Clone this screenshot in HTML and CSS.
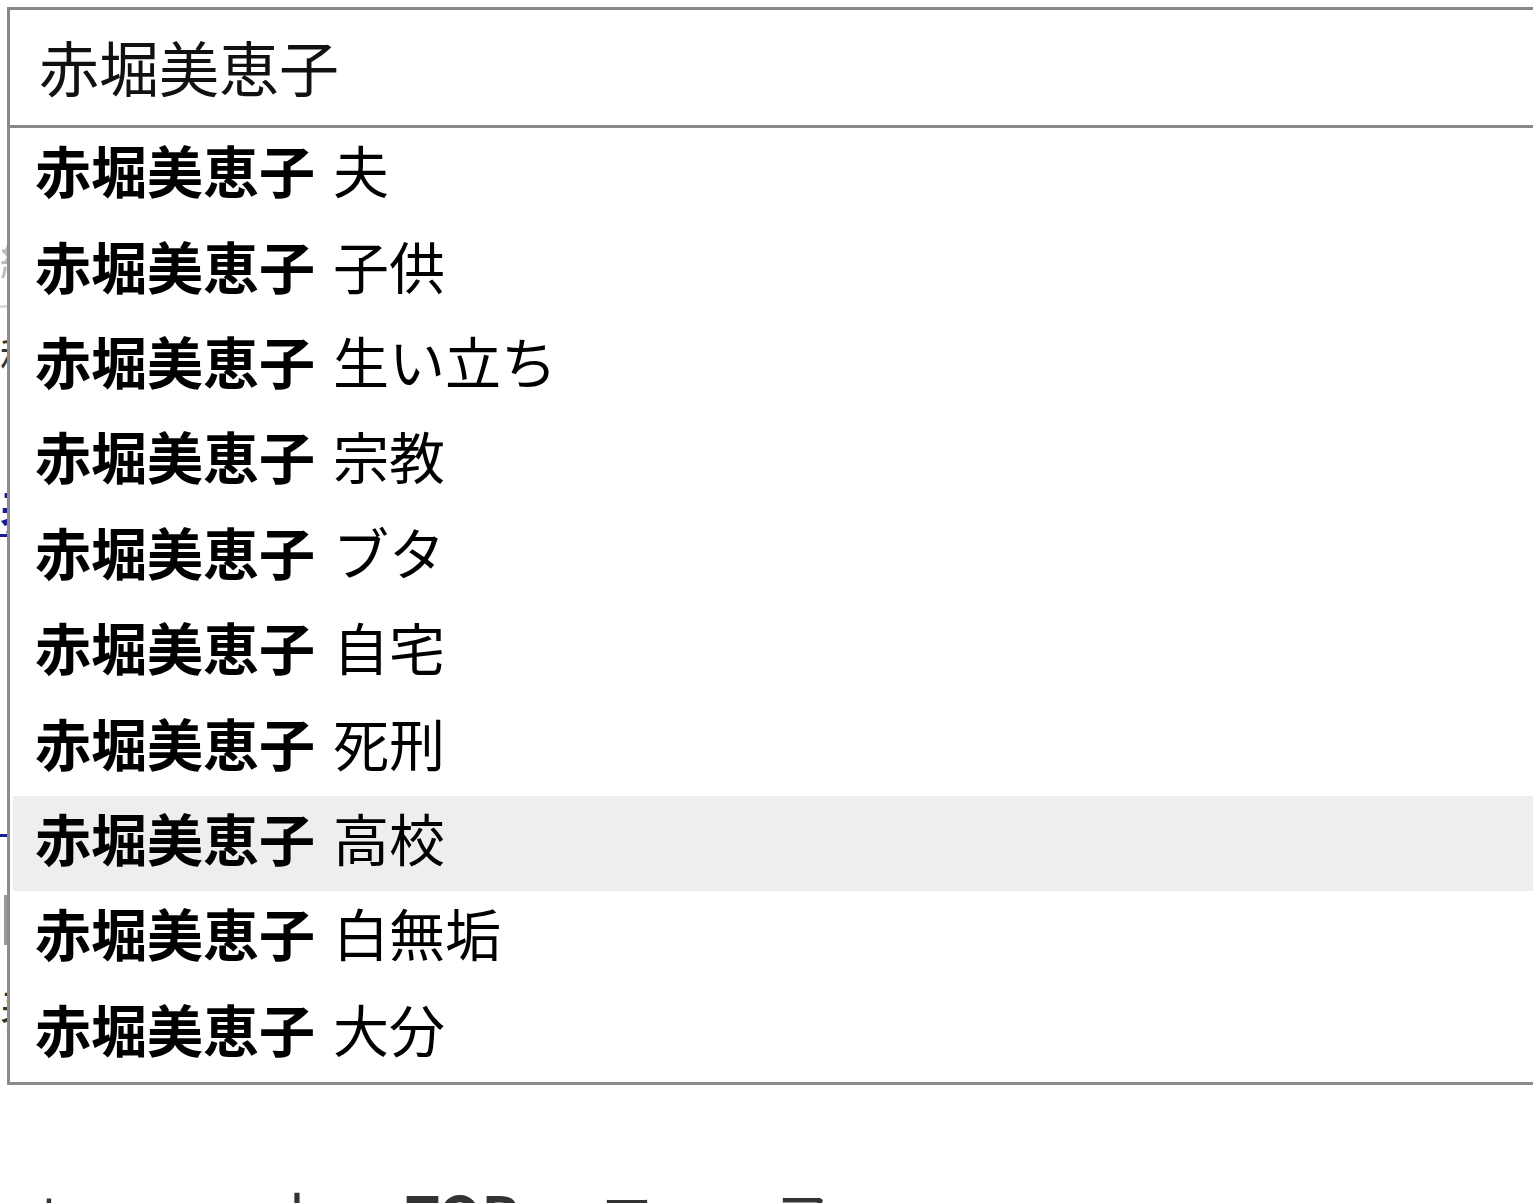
FILE: index.html
```html
<!DOCTYPE html>
<html lang="ja">
<head>
    <meta charset="UTF-8">
    <meta name="viewport" content="width=device-width, initial-scale=1.0">
    <title>検索</title>
    <link rel="stylesheet" href="styles.css">
</head>
<body>

    <!-- Page content behind the suggestion list -->
    <div class="page">
        <p class="faint">続きを読む</p>
        <hr class="rule">
        <p class="line">科学のニュース</p>
        <a class="link link-first" href="#">表示する</a>
        <p class="line line-gap">しかし、その後</p>
        <a class="link link-second" href="#">&nbsp;&nbsp;&nbsp;関連記事</a>
        <div class="quote-bar"></div>
        <p class="line line-last">表示件数</p>
        <div class="crumbs">
            <span class="crumb-t">t</span>
            <span class="crumb-l">l</span>
            <span class="crumb-top">TOP</span>
            <span class="crumb-e">エ</span>
            <span class="crumb-f">フ</span>
        </div>
    </div>

    <!-- Search box with suggestions -->
    <div class="search">
        <div class="search-input">赤堀美恵子</div>
        <ul class="suggestions">
            <li class="suggestion"><b>赤堀美恵子</b><span class="extra">夫</span></li>
            <li class="suggestion"><b>赤堀美恵子</b><span class="extra">子供</span></li>
            <li class="suggestion"><b>赤堀美恵子</b><span class="extra">生い立ち</span></li>
            <li class="suggestion"><b>赤堀美恵子</b><span class="extra">宗教</span></li>
            <li class="suggestion"><b>赤堀美恵子</b><span class="extra">ブタ</span></li>
            <li class="suggestion"><b>赤堀美恵子</b><span class="extra">自宅</span></li>
            <li class="suggestion"><b>赤堀美恵子</b><span class="extra">死刑</span></li>
            <li class="suggestion active"><b>赤堀美恵子</b><span class="extra">高校</span></li>
            <li class="suggestion"><b>赤堀美恵子</b><span class="extra">白無垢</span></li>
            <li class="suggestion"><b>赤堀美恵子</b><span class="extra">大分</span></li>
        </ul>
    </div>

</body>
</html>
```

FILE: styles.css
```css
/* General */
body {
    margin: 0;
    background: #fff;
    color: #000;
    font-family: "Noto Sans CJK JP", "Noto Sans", sans-serif;
    overflow: hidden;
}

/* Page underneath */
.page {
    padding-top: 230px;
    white-space: nowrap;
}

.page p {
    margin: 0;
}

.faint {
    font-size: 44px;
    line-height: 60px;
    color: #bbb;
}

.rule {
    margin: 15px 0 0;
    height: 3px;
    border: none;
    background: #ddd;
}

.line {
    font-size: 42px;
    line-height: 44px;
    color: #333;
    margin-top: 25px !important;
}

.line-gap {
    margin-top: 112px !important;
    font-size: 50px;
    line-height: 56px;
}

.line-last {
    margin-top: 38px !important;
    font-size: 48px;
    line-height: 50px;
}

.link {
    display: block;
    font-size: 50px;
    line-height: 56px;
    font-weight: 700;
    color: #1c1c94;
    text-decoration: underline;
    text-decoration-thickness: 3px;
}

.link-first {
    margin-top: 105px;
}

.link-second {
    margin-top: 76px;
}

.quote-bar {
    margin: 57px 0 0 4px;
    height: 50px;
    border-left: 4px solid #999;
}

.crumbs {
    display: flex;
    margin-top: 150px;
    font-size: 56px;
    line-height: 60px;
    color: #333;
}

.crumb-t { margin-left: 40px; }
.crumb-l { margin-left: 228px; }
.crumb-top { margin-left: 100px; font-weight: 700; }
.crumb-e { margin-left: 80px; }
.crumb-f { margin-left: 120px; }

/* Search overlay */
.search {
    position: absolute;
    top: 7px;
    left: 7px;
    width: 1580px;
    background: #fff;
}

.search-input {
    box-sizing: border-box;
    height: 121px;
    border: 3px solid #888;
    padding-left: 29px;
    font-size: 60px;
    line-height: 112px;
    color: #111;
}

.suggestions {
    list-style: none;
    margin: 0;
    padding: 0 0 0 3px;
    border: 3px solid #8c8c8c;
    border-top: none;
    background: #fff;
}

.suggestion {
    box-sizing: border-box;
    display: flex;
    align-items: center;
    height: 95.4px;
    padding: 0 0 14px 22px;
    font-size: 56px;
    color: #000;
}

.suggestion b {
    font-weight: 700;
}

.suggestion .extra {
    margin-left: 18px;
}

.suggestion.active {
    background: #eee;
}
```
